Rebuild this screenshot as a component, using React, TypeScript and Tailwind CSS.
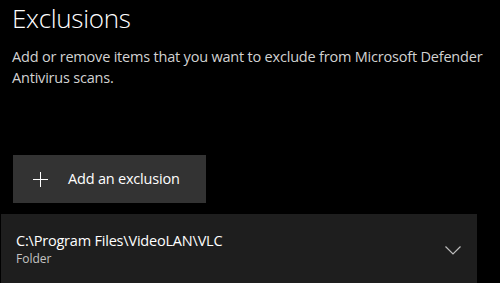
import React from "react";

function PlusIcon() {
    return (
        <svg width="15" height="15" viewBox="0 0 15 15" className="shrink-0">
            <path d="M7.5 0V15M0 7.5H15" stroke="#ffffff" strokeWidth="1" />
        </svg>
    );
}

function ChevronDown() {
    return (
        <svg width="16" height="9" viewBox="0 0 16 9" className="shrink-0">
            <path d="M0.5 0.5L8 8L15.5 0.5" stroke="#bdbdbd" strokeWidth="1.2" fill="none" />
        </svg>
    );
}

export default function App() {
    return (
        <div
            className="w-[500px] h-[283px] bg-black text-white overflow-hidden"
            style={{ fontFamily: '"Open Sans", "Noto Sans", sans-serif' }}
        >
            <div className="pl-[12px]">
                {/* Heading */}
                <h1 className="text-[26px] font-light leading-[36px] tracking-[-0.3px]">Exclusions</h1>

                <p className="mt-[10px] text-[14.5px] leading-[21px] text-[#d2d2d2] pr-[8px] tracking-[-0.2px]">
                    Add or remove items that you want to exclude from Microsoft Defender Antivirus scans.
                </p>

                {/* Add button */}
                <button className="mt-[67px] ml-[1px] w-[193px] h-[48px] bg-[#333333] flex items-center gap-[20px] pl-[20px]">
                    <PlusIcon />
                    <span className="text-[14.5px] tracking-[-0.2px] text-white">Add an exclusion</span>
                </button>
            </div>

            {/* Exclusion row */}
            <div className="mt-[11px] ml-[1px] w-[476px] h-[80px] bg-[#1e1e1e] flex items-start justify-between pl-[15px] pr-[16px] pt-[17px]">
                <div className="flex flex-col">
                    <span className="text-[14.5px] leading-[20px] tracking-[-0.2px] text-white">
                        C:\Program Files\VideoLAN\VLC
                    </span>
                    <span className="text-[12px] leading-[16px] text-[#c4c4c4]">Folder</span>
                </div>
                <div className="pt-[15px]">
                    <ChevronDown />
                </div>
            </div>
        </div>
    );
}
